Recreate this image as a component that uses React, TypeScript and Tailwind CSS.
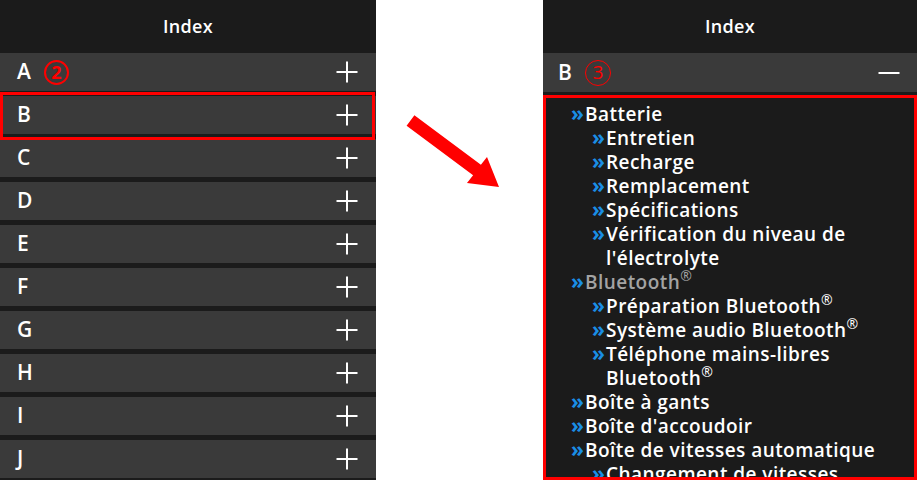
import { Fragment } from 'react';

const letters = ['A', 'B', 'C', 'D', 'E', 'F', 'G', 'H', 'I', 'J'];

type Entry = { level: 1 | 2; text: string; reg?: boolean; muted?: boolean };

const entries: Entry[] = [
  { level: 1, text: 'Batterie' },
  { level: 2, text: 'Entretien' },
  { level: 2, text: 'Recharge' },
  { level: 2, text: 'Remplacement' },
  { level: 2, text: 'Spécifications' },
  { level: 2, text: "Vérification du niveau de l'électrolyte" },
  { level: 1, text: 'Bluetooth', reg: true, muted: true },
  { level: 2, text: 'Préparation Bluetooth', reg: true },
  { level: 2, text: 'Système audio Bluetooth', reg: true },
  { level: 2, text: 'Téléphone mains-libres Bluetooth', reg: true },
  { level: 1, text: 'Boîte à gants' },
  { level: 1, text: "Boîte d'accoudoir" },
  { level: 1, text: 'Boîte de vitesses automatique' },
  { level: 2, text: 'Changement de vitesses' },
];

function Plus() {
  return (
    <svg width="22" height="22" viewBox="0 0 22 22" className="shrink-0">
      <path d="M11 0.5V21.5M0.5 11H21.5" stroke="white" strokeWidth="2" />
    </svg>
  );
}

function Minus() {
  return (
    <svg width="22" height="22" viewBox="0 0 22 22" className="shrink-0">
      <path d="M0.5 11H21.5" stroke="white" strokeWidth="2" />
    </svg>
  );
}

function Header() {
  return (
    <div className="h-[53px] flex items-center justify-center bg-[#1b1b1b] text-white text-[18px] font-semibold tracking-[0.3px]">
      Index
    </div>
  );
}

// A-J list, collapsed
function LeftPanel() {
  return (
    <div className="relative w-[376px] h-[480px] bg-[#1b1b1b] overflow-hidden">
      <Header />
      <div className="flex flex-col gap-[5px]">
        {letters.map((l) => (
          <div key={l} className="h-[38px] bg-[#3a3a3a] flex items-center pl-[17px] pr-[18px]">
            <span className="text-white text-[21px] font-semibold w-[27px]">{l}</span>
            {l === 'A' && (
              <span className="w-[25px] h-[25px] rounded-full border-[2.5px] border-[#f00] text-[#f00] text-[18px] font-bold flex items-center justify-center leading-none">
                2
              </span>
            )}
            <div className="flex-1" />
            <Plus />
          </div>
        ))}
      </div>
      {/* highlight box over B */}
      <div className="absolute left-0 top-[92px] w-[375px] h-[48px] border-[3px] border-[#f00]" />
    </div>
  );
}

function Arrow() {
  return (
    <svg width="167" height="480" viewBox="376 0 167 480" className="shrink-0">
      <polygon
        points="414.4,115.3 480.9,164.8 487,157 499,187 467,183 473.1,175.2 406.6,125.7"
        fill="#f00"
      />
    </svg>
  );
}

// B expanded
function RightPanel() {
  return (
    <div className="w-[374px] h-[480px] bg-[#1b1b1b] overflow-hidden flex flex-col">
      <Header />
      <div className="h-[39px] shrink-0 bg-[#3a3a3a] flex items-center pl-[15px] pr-[17px]">
        <span className="text-white text-[21px] font-semibold w-[27px]">B</span>
        <span className="w-[26px] h-[26px] rounded-full border-[1.5px] border-[#f00] text-[#f00] text-[19px] flex items-center justify-center leading-none">
          3
        </span>
        <div className="flex-1" />
        <Minus />
      </div>
      <div className="mt-[3px] flex-1 border-[3px] border-[#f00] pt-[4px] pl-[25px] pr-[6px] overflow-hidden">
        {entries.map((e, i) => (
          <div key={i} className={`flex leading-[24px] text-[19px] font-semibold tracking-[0.45px] ${e.level === 2 ? 'pl-[21px]' : ''}`}>
            <span className="relative -top-[1px] text-[#1a8ee6] text-[21px] font-bold leading-[24px] tracking-[-1px] w-[14px] shrink-0">»</span>
            <span className={e.muted ? 'text-[#a3a3a3]' : 'text-white'}>
              {e.text}
              {e.reg && (
                <Fragment>
                  <sup className="text-[14px] font-normal top-[-0.55em]">®</sup>
                </Fragment>
              )}
            </span>
          </div>
        ))}
      </div>
    </div>
  );
}

export default function App() {
  return (
    <div className="w-[917px] h-[480px] bg-white flex overflow-hidden" style={{ fontFamily: '"Open Sans", sans-serif' }}>
      <LeftPanel />
      <Arrow />
      <RightPanel />
    </div>
  );
}
